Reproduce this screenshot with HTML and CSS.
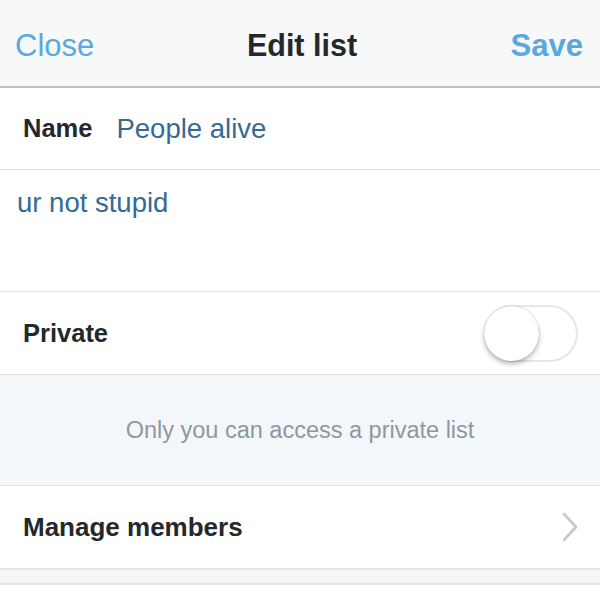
FILE: index.html
```html
<!doctype html>
<html>

<head>
	<link rel="stylesheet" href="styles.css">
</head>

<body>
	<div class="nav">
		<span class="nav-btn">Close</span>
		<span class="nav-title">Edit list</span>
		<span class="nav-btn save">Save</span>
	</div>

	<div class="row name-row">
		<span class="label">Name</span>
		<span class="value">People alive</span>
	</div>

	<div class="desc">ur not stupid</div>

	<div class="row private-row">
		<span class="label">Private</span>
		<span class="toggle"><span class="knob"></span></span>
	</div>

	<div class="info">Only you can access a private list</div>

	<div class="row manage-row">
		<span class="label">Manage members</span>
		<svg class="chevron" width="16" height="30" viewBox="0 0 16 30">
			<polyline points="2,2 14,15 2,28" fill="none" stroke="#c8c8cc" stroke-width="2.6" stroke-linecap="round" stroke-linejoin="round" />
		</svg>
	</div>

	<div class="strip"></div>
</body>

</html>
```

FILE: styles.css
```css
body {
	margin: 0;
	background: #fff;
	font-family: "Liberation Sans", Arial, Helvetica, sans-serif;
	color: #292f33;
}

.nav {
	height: 88px;
	box-sizing: border-box;
	padding: 5px 17px 0 15px;
	background: #f7f8f8;
	border-bottom: 2px solid #c2c2c2;
	display: flex;
	align-items: center;
	justify-content: space-between;
}

.nav-btn {
	font-size: 31px;
	color: #5aa8e0;
	width: 90px;
}

.nav-btn.save {
	font-weight: bold;
	text-align: right;
}

.nav-title {
	font-size: 30.5px;
	font-weight: bold;
	color: #24282b;
	margin-left: 6px;
}

.row {
	display: flex;
	align-items: center;
	padding: 0 23px;
	border-bottom: 1px solid #e2e2e2;
}

.label {
	font-size: 25.5px;
	font-weight: bold;
	color: #24282b;
}

.manage-row .label {
	font-size: 26px;
}

.value {
	font-size: 27.5px;
	color: #336a96;
	margin-left: 24px;
}

.name-row {
	height: 81px;
}

.desc {
	height: 101px;
	padding: 17px 17px 3px;
	font-size: 27.5px;
	color: #336a96;
	border-bottom: 1px solid #e2e2e2;
}

.private-row {
	height: 82px;
	justify-content: space-between;
}

.toggle {
	width: 90px;
	height: 53px;
	border: 2px solid #e6e6e6;
	border-radius: 30px;
	margin-right: -1px;
	display: flex;
	align-items: center;
}

.knob {
	width: 55px;
	height: 55px;
	border-radius: 50%;
	background: #fff;
	margin-left: -2px;
	box-shadow: 0 3px 5px rgba(0, 0, 0, 0.28), 0 0 1px rgba(0, 0, 0, 0.3);
}

.info {
	height: 110px;
	background: #f4f7f9;
	border-bottom: 1px solid #e2e2e2;
	display: flex;
	align-items: center;
	justify-content: center;
	font-size: 23.5px;
	color: #8d98a1;
}

.manage-row {
	height: 82px;
	justify-content: space-between;
	border-bottom: 2px solid #e3e6e8;
}

.chevron {
	margin-right: -1px;
}

.strip {
	height: 13px;
	background: #f4f7f9;
	border-bottom: 2px solid #e3e6e8;
}
```
